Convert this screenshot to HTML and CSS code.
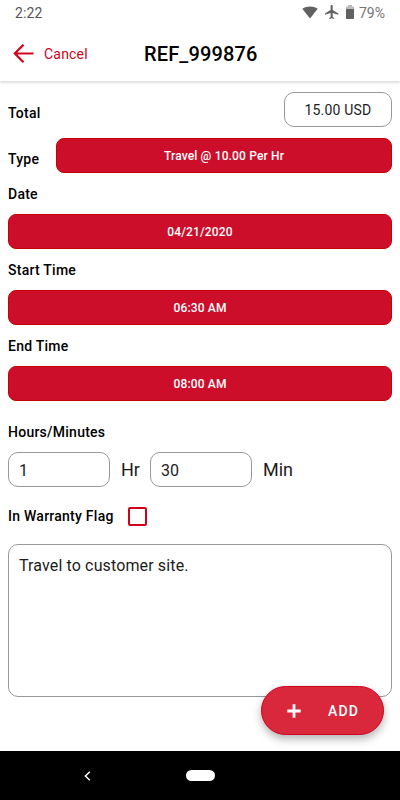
FILE: index.html
```
<!DOCTYPE html>
<html lang="en">
<head>
  <meta charset="UTF-8" />
  <meta name="viewport" content="width=device-width, initial-scale=1" />
  <title>REF_999876</title>
  <link rel="stylesheet" href="styles.css">
</head>
<body>
  <div class="status-bar">
    <span class="clock">2:22</span>
    <div class="status-icons">
      <svg class="wifi" width="16" height="13" viewBox="0 0 16 13"><path d="M0.3 2.8C4.8-0.4 11.2-0.4 15.7 2.8L8 12.6z" /></svg>
      <svg class="plane" width="14" height="14" viewBox="2 2 20 20"><path d="M21 16v-2l-8-5V3.5c0-.83-.67-1.5-1.5-1.5S10 2.67 10 3.5V9l-8 5v2l8-2.5V19l-2 1.500V22l3.500-1 3.500 1v-1.500L13 19v-5.500l8 2.500z" /></svg>
      <svg class="battery" width="8" height="14" viewBox="0 0 8 14"><path d="M2 0h4v1.500h2V4H0V1.500h2z" fill="#bdbdbd" /><path d="M0 4h8v9.300q0 .7-.7.700H.7q-.7 0-.7-.7z" /></svg>
      <span class="percent">79%</span>
    </div>
  </div>

  <header class="header">
    <a class="cancel">
      <svg width="21" height="20" viewBox="0 0 21 20"><path d="M10.500 .7L1.800 9.500l8.700 8.800M2 9.500h18.500" /></svg>
      <span>Cancel</span>
    </a>
    <h1>REF_999876</h1>
  </header>

  <form class="form">
    <div class="row total-row">
      <span class="label">Total</span>
      <div class="total">15.00 USD</div>
    </div>

    <div class="row type-row">
      <span class="label">Type</span>
      <button type="button" class="picker">Travel @ 10.00 Per Hr</button>
    </div>

    <div class="label block">Date</div>
    <button type="button" class="picker">04/21/2020</button>

    <div class="label block">Start Time</div>
    <button type="button" class="picker">06:30 AM</button>

    <div class="label block">End Time</div>
    <button type="button" class="picker">08:00 AM</button>

    <div class="label block duration-label">Hours/Minutes</div>
    <div class="row duration">
      <input type="text" value="1" />
      <span class="unit">Hr</span>
      <input type="text" value="30" />
      <span class="unit">Min</span>
    </div>

    <label class="warranty">
      <span class="label">In Warranty Flag</span>
      <input type="checkbox" />
    </label>

    <textarea class="notes" spellcheck="false">Travel to customer site.</textarea>
  </form>

  <button type="button" class="add">
    <svg width="14" height="14" viewBox="0 0 14 14"><path d="M7 .3v13.400M.3 7h13.400" /></svg>
    <span>ADD</span>
  </button>

  <nav class="nav-bar">
    <svg class="back" width="7" height="10" viewBox="0 0 7 10"><path d="M5.800 .8L1.400 5l4.400 4.200" /></svg>
    <span class="home"></span>
  </nav>
</body>
</html>
```
FILE: styles.css
```
* {
  box-sizing: border-box;
}
body {
  margin: 0;
  height: 800px;
  display: flex;
  flex-direction: column;
  position: relative;
  overflow: hidden;
  background: #fff;
  color: #000;
  font-family: Roboto, sans-serif;
}
button, input, textarea {
  font-family: inherit;
  margin: 0;
}
svg {
  display: block;
  flex: none;
}
.status-bar {
  display: flex;
  justify-content: space-between;
  height: 26px;
  padding: 0 15px;
  line-height: 26px;
  font-size: 14px;
  letter-spacing: 0.1px;
  color: #555;
}
.status-icons {
  display: flex;
  align-items: center;
  height: 24px;
  fill: #616161;
}
.plane {
  margin-left: 7px;
}
.battery {
  margin-left: 7px;
}
.percent {
  margin-left: 5px;
  padding-top: 2px;
  font-size: 14px;
  letter-spacing: 0;
  color: #757575;
}
.header {
  display: flex;
  align-items: center;
  height: 55px;
  padding: 0 13px;
  box-shadow: 0 2px 2px rgba(0, 0, 0, 0.12);
}
.cancel {
  display: flex;
  align-items: center;
  width: 131px;
  color: #d0021b;
  font-size: 14px;
  letter-spacing: 0.2px;
}
.cancel svg {
  margin-right: 10px;
  fill: none;
  stroke: #d0021b;
  stroke-width: 2.2;
}
h1 {
  margin: 0;
  font-size: 20px;
  font-weight: 500;
  letter-spacing: 0.15px;
}
.form {
  padding: 11px 8px 0;
}
.row {
  display: flex;
  align-items: center;
}
.label {
  font-size: 14px;
  line-height: 20px;
  font-weight: 500;
  letter-spacing: 0.25px;
}
.label.block {
  margin: 11px 0 10px;
}
.total-row {
  justify-content: space-between;
}
.total-row .label,
.type-row .label {
  position: relative;
  top: 3px;
}
.total {
  width: 108px;
  height: 35px;
  border: 1px solid #999;
  border-radius: 10px;
  line-height: 35px;
  text-align: center;
  font-size: 14px;
  letter-spacing: 0.2px;
  color: #1c1c1c;
}
.type-row {
  margin-top: 11px;
}
.type-row .label {
  width: 48px;
}
.picker {
  display: block;
  width: 100%;
  height: 35px;
  padding: 1px 0 0;
  border: 1px solid #c80000;
  border-radius: 8px;
  background: #cc0e2b;
  color: #fff;
  font-size: 12px;
  font-weight: 500;
  letter-spacing: 0.15px;
}
.type-row .picker {
  flex: 1;
}
.label.duration-label {
  margin-top: 21px;
}
.duration input {
  width: 102px;
  height: 35px;
  padding: 1px 10px 0;
  border: 1px solid #999;
  border-radius: 10px;
  color: #1c1c1c;
  font-size: 16px;
}
.unit {
  width: 40px;
  padding-left: 11px;
  font-size: 18px;
  color: #1c1c1c;
}
.warranty {
  display: flex;
  align-items: center;
  height: 20px;
  margin-top: 19px;
}
.warranty .label {
  width: 120px;
}
.warranty input {
  appearance: none;
  width: 19px;
  height: 19px;
  border: 2px solid #d0021b;
  border-radius: 2px;
}
.notes {
  display: block;
  width: 100%;
  height: 153px;
  margin-top: 18px;
  padding: 11px 10px;
  border: 1px solid #999;
  border-radius: 10px;
  resize: none;
  color: #1c1c1c;
  font-size: 16px;
  line-height: 20px;
  letter-spacing: 0.13px;
}
/* floats over the bottom corner of the notes box */
.add {
  position: absolute;
  right: 16px;
  bottom: 65px;
  display: flex;
  align-items: center;
  width: 123px;
  height: 49px;
  padding: 0 0 0 25px;
  border: 1px solid #d0021b;
  border-radius: 25px;
  background: #d9273b;
  box-shadow: 0 4px 8px rgba(0, 0, 0, 0.3);
  color: #fff;
  font-size: 14px;
  font-weight: 500;
  letter-spacing: 1.2px;
}
.add svg {
  margin-right: 27px;
  stroke: #fff;
  stroke-width: 2.8;
}
.nav-bar {
  display: flex;
  align-items: center;
  height: 49px;
  margin-top: auto;
  padding-left: 84px;
  background: #000;
}
.back {
  fill: none;
  stroke: #fff;
  stroke-width: 1.5;
}
.home {
  width: 29px;
  height: 11px;
  margin-left: 95px;
  border-radius: 6px;
  background: #fff;
}
```
